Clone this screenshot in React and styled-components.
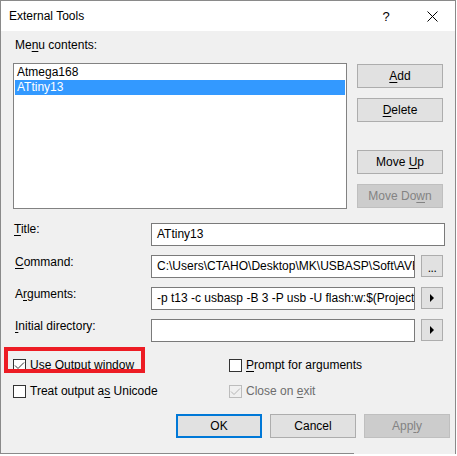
import React from "react";
import styled, { createGlobalStyle } from "styled-components";

const GlobalStyle = createGlobalStyle`
  html, body {
    margin: 0;
    padding: 0;
    background: #ffffff;
  }
  body {
    font-family: "Liberation Sans", Arial, sans-serif;
    font-size: 12px;
    line-height: 15px;
    color: #000;
  }
`;

const Window = styled.div`
  width: 456px;
  height: 454px;
  box-sizing: border-box;
  border: 1px solid #8a8a8a;
  border-bottom: none;
  background: #f0f0f0;
  display: flex;
  flex-direction: column;
`;

const TitleBar = styled.div`
  height: 30px;
  background: #ffffff;
  display: flex;
  align-items: center;
  padding-left: 8px;
`;

const TitleText = styled.div`
  flex: 1;
`;

const CaptionButton = styled.div`
  width: 46px;
  height: 30px;
  display: flex;
  align-items: center;
  justify-content: center;
  font-size: 13px;
`;

const Body = styled.div`
  padding-left: 12px;
  display: flex;
  flex-direction: column;
`;

const Label = styled.div`
  padding-left: ${({ $indent }) => $indent ?? 1}px;
  margin-top: ${({ $top }) => $top ?? 0}px;
  white-space: nowrap;
`;

const Key = styled.span`
  text-decoration: underline;
  text-underline-offset: 2px;
`;

const ListRow = styled.div`
  display: flex;
  margin-top: 10px;
`;

const ListBox = styled.div`
  width: 334px;
  height: 146px;
  box-sizing: border-box;
  border: 1px solid #828282;
  background: #ffffff;
  padding: 1px;
`;

const ListItem = styled.div`
  height: 15px;
  padding-left: 2px;
  background: ${({ $selected }) => ($selected ? "#3399ff" : "transparent")};
  color: ${({ $selected }) => ($selected ? "#ffffff" : "#000")};
`;

const SideButtons = styled.div`
  display: flex;
  flex-direction: column;
  margin-left: 10px;
  padding-top: 1px;
`;

const Button = styled.div`
  width: ${({ $w }) => $w ?? 86}px;
  height: 24px;
  box-sizing: border-box;
  margin-top: ${({ $top }) => $top ?? 0}px;
  border: ${({ $default }) => ($default ? "2px solid #0078d7" : "1px solid #adadad")};
  background: #e1e1e1;
  display: flex;
  align-items: center;
  justify-content: center;
  white-space: nowrap;

  &[data-disabled="true"] {
    background: #cccccc;
    border-color: #bfbfbf;
    color: #838383;
  }
`;

const Form = styled.div`
  display: flex;
  flex-direction: column;
  gap: 9px;
  margin-top: 14px;
`;

const FormRow = styled.div`
  display: flex;
  align-items: flex-start;
`;

const FieldLabel = styled.div`
  width: 138px;
  padding-left: ${({ $indent }) => $indent ?? 2}px;
  box-sizing: border-box;
  margin-top: ${({ $top }) => $top ?? 0}px;
  white-space: nowrap;
`;

const Field = styled.div`
  width: ${({ $w }) => $w}px;
  height: 23px;
  box-sizing: border-box;
  border: 1px solid #7a7a7a;
  background: #ffffff;
  padding: 3px 0 0 5px;
  white-space: nowrap;
  overflow: hidden;
`;

const SmallButton = styled.div`
  width: 22px;
  height: 22px;
  box-sizing: border-box;
  margin-left: 6px;
  border: 1px solid #adadad;
  background: #e1e1e1;
  display: flex;
  align-items: center;
  justify-content: center;
  font-size: 12px;
`;

const Dots = styled.span`
  margin-top: 4px;
  letter-spacing: -0.5px;
`;

const Checks = styled.div`
  display: grid;
  grid-template-columns: 216px 1fr;
  row-gap: 10px;
  margin-top: 15px;
`;

const CheckItem = styled.div`
  position: relative;
  display: flex;
  align-items: center;
  height: 16px;
  color: ${({ $disabled }) => ($disabled ? "#6d6d6d" : "#000")};
`;

const Box = styled.div`
  width: 13px;
  height: 13px;
  box-sizing: border-box;
  border: 1px solid ${({ $disabled }) => ($disabled ? "#bcbcbc" : "#333333")};
  background: ${({ $disabled }) => ($disabled ? "#f0f0f0" : "#ffffff")};
  margin-right: 4px;
  display: flex;
  align-items: center;
  justify-content: center;
`;

const Highlight = styled.div`
  position: absolute;
  left: -9px;
  top: -10px;
  width: 141px;
  height: 26px;
  box-sizing: border-box;
  border: 4px solid #ed1c24;
  pointer-events: none;
`;

const Footer = styled.div`
  display: flex;
  justify-content: flex-end;
  gap: 8px;
  margin-top: 15px;
  padding-right: 5px;
`;

const BottomEdge = styled.div`
  margin-top: auto;
  width: 354px;
  height: 1px;
  margin-left: -1px;
  background: #8a8a8a;
`;

const Check = ({ color }) => (
  <svg width="11" height="11" viewBox="0 0 11 11">
    <path d="M1 5.5 L4 8.5 L10 2.5" fill="none" stroke={color} strokeWidth="1" />
  </svg>
);

const Arrow = () => (
  <svg width="6" height="8" viewBox="0 0 6 8">
    <polygon points="1,0 5,4 1,8" fill="#000" />
  </svg>
);

const CheckBox = ({ checked, disabled, children, highlight }) => (
  <CheckItem $disabled={disabled}>
    <Box $disabled={disabled}>
      {checked && <Check color={disabled ? "#b5b5b5" : "#333"} />}
    </Box>
    <span>{children}</span>
    {highlight && <Highlight />}
  </CheckItem>
);

export default function App() {
  return (
    <>
      <GlobalStyle />
      <Window>
        <TitleBar>
          <TitleText>External Tools</TitleText>
          <CaptionButton>?</CaptionButton>
          <CaptionButton>
            <svg width="11" height="11" viewBox="0 0 11 11">
              <path d="M0.5 0.5 L10.5 10.5 M10.5 0.5 L0.5 10.5" stroke="#000" strokeWidth="1" />
            </svg>
          </CaptionButton>
        </TitleBar>
        <Body>
          <Label $top={7} $indent={2}>
            Me<Key>n</Key>u contents:
          </Label>
          <ListRow>
            <ListBox>
              <ListItem>Atmega168</ListItem>
              <ListItem $selected>ATtiny13</ListItem>
            </ListBox>
            <SideButtons>
              <Button><span><Key>A</Key>dd</span></Button>
              <Button $top={10}><span><Key>D</Key>elete</span></Button>
              <Button $top={28}><span>Move <Key>U</Key>p</span></Button>
              <Button $top={10} data-disabled="true"><span>Move Do<Key>w</Key>n</span></Button>
            </SideButtons>
          </ListRow>
          <Form>
            <FormRow>
              <FieldLabel $indent={1} $top={-1}><Key>T</Key>itle:</FieldLabel>
              <Field $w={294}>ATtiny13</Field>
            </FormRow>
            <FormRow>
              <FieldLabel><Key>C</Key>ommand:</FieldLabel>
              <Field $w={264}>C:\Users\CTAHO\Desktop\MK\USBASP\Soft\AVRDUDE\avrdude.exe</Field>
              <SmallButton><Dots>...</Dots></SmallButton>
            </FormRow>
            <FormRow>
              <FieldLabel>A<Key>r</Key>guments:</FieldLabel>
              <Field $w={264}>-p t13 -c usbasp -B 3 -P usb -U flash:w:$(ProjectDir)</Field>
              <SmallButton><Arrow /></SmallButton>
            </FormRow>
            <FormRow>
              <FieldLabel><Key>I</Key>nitial directory:</FieldLabel>
              <Field $w={264} />
              <SmallButton><Arrow /></SmallButton>
            </FormRow>
          </Form>
          <Checks>
            <CheckBox checked highlight>
              Use <Key>O</Key>utput window
            </CheckBox>
            <CheckBox>
              <Key>P</Key>rompt for arguments
            </CheckBox>
            <CheckBox>
              Treat output a<Key>s</Key> Unicode
            </CheckBox>
            <CheckBox checked disabled>
              Close on <Key>e</Key>xit
            </CheckBox>
          </Checks>
          <Footer>
            <Button $default>OK</Button>
            <Button>Cancel</Button>
            <Button data-disabled="true"><span>App<Key>l</Key>y</span></Button>
          </Footer>
        </Body>
        <BottomEdge />
      </Window>
    </>
  );
}
